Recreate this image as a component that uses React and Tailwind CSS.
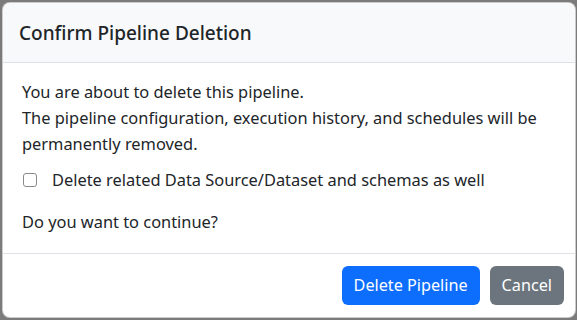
export default function App() {
  return (
    <div className="h-[320px] w-[577px] overflow-hidden bg-[#7b7b7b] pt-[2px] pl-[2px] font-['Noto_Sans',sans-serif] text-[#212529]">
      <div className="w-[574px] h-[316px] rounded-lg border border-black/20 bg-white overflow-hidden flex flex-col">
        <div className="h-[60px] shrink-0 border-b border-[#dee2e6] bg-[#f8f9fa] px-4 flex items-center">
          <h5 className="text-[19px] font-medium leading-[30px] pt-[1px]">Confirm Pipeline Deletion</h5>
        </div>
        <div className="px-[19px] pt-4 text-[16.4px] leading-[26px] flex-1">
          <p>
            You are about to delete this pipeline.
            <br />
            The pipeline configuration, execution history, and schedules will be permanently removed.
          </p>
          <label className="mt-[10px] flex items-center gap-[15px]">
            <input type="checkbox" className="ml-[1px] h-[14px] w-[14px] appearance-none rounded-[3px] border border-[#8a8a8a] bg-white" />
            <span>Delete related Data Source/Dataset and schemas as well</span>
          </label>
          <p className="mt-[16px]">Do you want to continue?</p>
        </div>
        <div className="h-[64px] shrink-0 border-t border-[#dee2e6] flex items-center justify-end gap-[10px] pr-[11px]">
          <button className="h-[39px] rounded-md bg-[#0d6efd] px-[12px] text-[16.2px] text-white">Delete Pipeline</button>
          <button className="h-[39px] rounded-md bg-[#6c757d] px-[12px] text-[16.2px] text-white">Cancel</button>
        </div>
      </div>
    </div>
  );
}
